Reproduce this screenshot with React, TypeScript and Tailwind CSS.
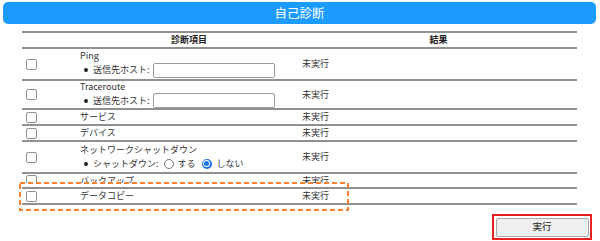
import React from "react";

const Checkbox = () => (
  <span className="block w-[11px] h-[11px] rounded-[2px] border border-[#919191] bg-white" />
);

const Bullet = () => (
  <span className="inline-block w-[4px] h-[4px] rounded-full bg-[#222] ml-[4px] mr-[5px]" />
);

const Row = ({
  h,
  children,
  result = "未実行",
}: {
  h: string;
  children: React.ReactNode;
  result?: string;
}) => (
  <div className={`grid grid-cols-[56px_222px_277px] border-b-2 border-[#909090] ${h}`}>
    <div className="flex items-center pl-[4px]">
      <Checkbox />
    </div>
    <div className="flex flex-col justify-center pl-[2px]">{children}</div>
    <div className="flex items-center pl-[2px]">{result}</div>
  </div>
);

export default function App() {
  return (
    <div className="relative w-[600px] h-[241px] bg-white overflow-hidden font-['Noto_Sans_CJK_JP',sans-serif] text-[9px] leading-[12px] text-[#333333]">
      <div className="ml-[3px] mt-[2px] w-[593px] h-[22px] rounded-[5px] bg-[#1b9bfc] flex items-center justify-center text-white text-[12.5px] leading-none">
        自己診断
      </div>

      <div className="ml-[22px] mt-[7px] w-[555px] border-t-2 border-[#909090]">
        <div className="grid grid-cols-[56px_222px_277px] h-[16px] border-b-2 border-[#909090] font-bold text-[#222]">
          <div />
          <div className="flex items-center justify-center">診断項目</div>
          <div className="flex items-center justify-center">結果</div>
        </div>

        <Row h="h-[32px]">
          <div className="h-[12px] mt-[1px]">Ping</div>
          <div className="flex items-center h-[16px] mb-[1px]">
            <Bullet />
            <span>送信先ホスト:</span>
            <span className="ml-[3px] w-[122px] h-[15px] border border-[#9a9a9a] rounded-[2px] bg-white" />
          </div>
        </Row>

        <Row h="h-[29px]">
          <div className="h-[12px]">Traceroute</div>
          <div className="flex items-center h-[15px]">
            <Bullet />
            <span>送信先ホスト:</span>
            <span className="ml-[3px] w-[122px] h-[15px] border border-[#9a9a9a] rounded-[2px] bg-white" />
          </div>
        </Row>

        <Row h="h-[16px]">
          <div>サービス</div>
        </Row>

        <Row h="h-[16px]">
          <div>デバイス</div>
        </Row>

        <Row h="h-[32px]">
          <div className="h-[13px]">ネットワークシャットダウン</div>
          <div className="flex items-center h-[14px]">
            <Bullet />
            <span>シャットダウン:</span>
            <span className="ml-[5px] w-[10px] h-[10px] rounded-full border border-[#7a7a7a] bg-white" />
            <span className="ml-[4px]">する</span>
            <span className="ml-[6px] w-[10px] h-[10px] rounded-full bg-[#1a73e8] flex items-center justify-center">
              <span className="w-[7px] h-[7px] rounded-full bg-white flex items-center justify-center">
                <span className="w-[5px] h-[5px] rounded-full bg-[#1a73e8]" />
              </span>
            </span>
            <span className="ml-[5px]">しない</span>
          </div>
        </Row>

        <Row h="h-[15px]">
          <div>バックアップ</div>
        </Row>

        <Row h="h-[16px]">
          <div>データコピー</div>
        </Row>
      </div>

      <div className="flex justify-end pr-[8px] mt-[9px]">
        <div className="w-[100px] h-[26px] border-[2.5px] border-[#e8221c] p-[1.5px]">
          <button className="w-full h-full bg-[#efefef] border border-[#a8a8a8] rounded-[2px] text-[9.5px] leading-none text-[#222] flex items-center justify-center">
            実行
          </button>
        </div>
      </div>

      <div className="absolute left-[19px] top-[182px] w-[330px] h-[29px] pointer-events-none">
        <div className="absolute left-[2px] right-[2px] top-[1px] h-[4px] bg-white" />
        <svg className="absolute inset-0" width="330" height="29" viewBox="0 0 330 29">
          <rect x="1" y="1" width="328" height="27" fill="none" stroke="#f5822f" strokeWidth="2" strokeDasharray="5 3" />
        </svg>
      </div>
    </div>
  );
}
